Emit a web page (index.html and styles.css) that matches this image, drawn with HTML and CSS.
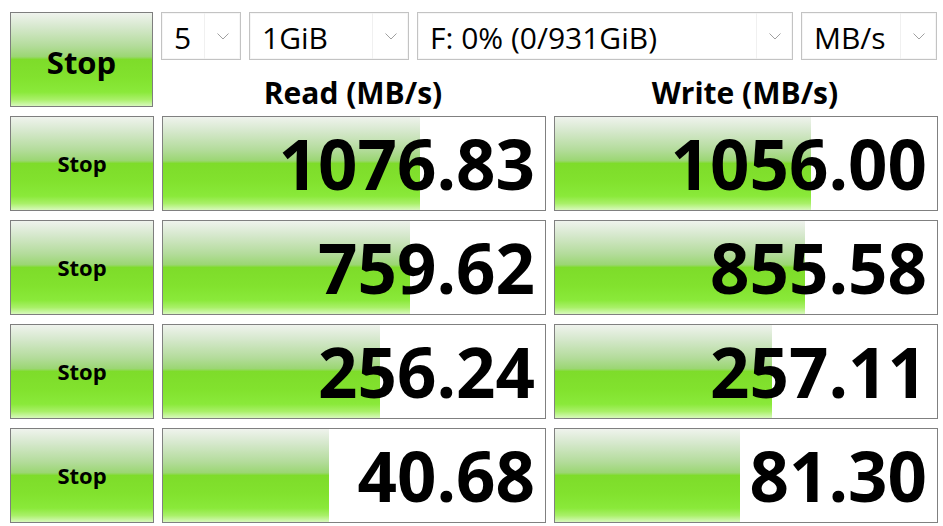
FILE: index.html
```html
<!DOCTYPE html>
<html>
<head>
<meta charset="utf-8">
<link rel="stylesheet" href="styles.css">
</head>
<body>
<div class="app">
  <div class="top">
    <div class="btn btn-main">Stop</div>
    <div class="top-right">
      <div class="combos">
        <div class="combo w80"><span class="val">5</span><span class="arrow"><svg width="12" height="7" viewBox="0 0 12 7"><path d="M0.5 0.5 L6 6 L11.5 0.5" fill="none" stroke="#a0a0a0" stroke-width="1"/></svg></span></div>
        <div class="combo w160"><span class="val">1GiB</span><span class="arrow"><svg width="12" height="7" viewBox="0 0 12 7"><path d="M0.5 0.5 L6 6 L11.5 0.5" fill="none" stroke="#a0a0a0" stroke-width="1"/></svg></span></div>
        <div class="combo w376"><span class="val">F: 0% (0/931GiB)</span><span class="arrow"><svg width="12" height="7" viewBox="0 0 12 7"><path d="M0.5 0.5 L6 6 L11.5 0.5" fill="none" stroke="#a0a0a0" stroke-width="1"/></svg></span></div>
        <div class="combo w136"><span class="val">MB/s</span><span class="arrow"><svg width="12" height="7" viewBox="0 0 12 7"><path d="M0.5 0.5 L6 6 L11.5 0.5" fill="none" stroke="#a0a0a0" stroke-width="1"/></svg></span></div>
      </div>
      <div class="headers">
        <div class="head">Read (MB/s)</div>
        <div class="head">Write (MB/s)</div>
      </div>
    </div>
  </div>

  <div class="row">
    <div class="btn btn-row">Stop</div>
    <div class="panel"><div class="bar" style="width:67.3%"></div><div class="num">1076.83</div></div>
    <div class="panel"><div class="bar" style="width:67.0%"></div><div class="num">1056.00</div></div>
  </div>
  <div class="row">
    <div class="btn btn-row">Stop</div>
    <div class="panel"><div class="bar" style="width:64.7%"></div><div class="num">759.62</div></div>
    <div class="panel"><div class="bar" style="width:65.4%"></div><div class="num">855.58</div></div>
  </div>
  <div class="row">
    <div class="btn btn-row">Stop</div>
    <div class="panel"><div class="bar" style="width:56.8%"></div><div class="num">256.24</div></div>
    <div class="panel"><div class="bar" style="width:56.8%"></div><div class="num">257.11</div></div>
  </div>
  <div class="row">
    <div class="btn btn-row">Stop</div>
    <div class="panel"><div class="bar" style="width:43.5%"></div><div class="num">40.68</div></div>
    <div class="panel"><div class="bar" style="width:48.4%"></div><div class="num">81.30</div></div>
  </div>
</div>
</body>
</html>
```

FILE: styles.css
```css
html, body {
  margin: 0;
  padding: 0;
  background: #ffffff;
}

body {
  font-family: "Open Sans", "Noto Sans", sans-serif;
  color: #000;
  width: 943px;
  height: 526px;
  overflow: hidden;
}

.app {
  padding: 12px 6px 0 10px;
  display: flex;
  flex-direction: column;
  gap: 9px;
}

.top {
  display: flex;
  gap: 8px;
  height: 95px;
}

.btn {
  box-sizing: border-box;
  border: 1px solid #7e7e7e;
  width: 144px;
  display: flex;
  align-items: center;
  justify-content: center;
  font-weight: 700;
  background: linear-gradient(to bottom,
    #eff3ed 0%,
    #d6e8cd 15%,
    #b4dc9c 35%,
    #9bd673 47%,
    #7edc2a 50%,
    #82e22e 70%,
    #8ae93a 85%,
    #a9f069 93%,
    #d8f9bd 100%);
}

.btn-main {
  font-size: 31px;
  padding-top: 5px;
}

.btn-row {
  font-size: 22px;
  padding-bottom: 1px;
}

.top-right {
  flex: 1;
  display: flex;
  flex-direction: column;
}

.combos {
  display: flex;
  gap: 8px;
  height: 48px;
}

.combo {
  box-sizing: border-box;
  height: 48px;
  border: 1px solid #c3c3c3;
  display: flex;
  align-items: stretch;
  background: #fff;
  box-shadow: inset 0 0 0 1px #f6f6f6;
}

.w80 { width: 80px; }
.w160 { width: 160px; }
.w376 { width: 376px; }
.w136 { width: 136px; }

.val {
  flex: 1;
  font-size: 30px;
  line-height: 46px;
  padding-top: 2px;
  padding-left: 12px;
  border-right: 1px solid #f0f0f0;
  white-space: nowrap;
  overflow: hidden;
}

.arrow {
  width: 35px;
  display: flex;
  align-items: center;
  justify-content: center;
  padding-top: 1px;
}

.headers {
  flex: 1;
  display: grid;
  grid-template-columns: 384px 384px;
  gap: 8px;
}

.head {
  font-size: 30px;
  font-weight: 700;
  text-align: center;
  line-height: 40px;
  padding-top: 13px;
}

.row {
  display: grid;
  grid-template-columns: 144px 384px 384px;
  column-gap: 8px;
  height: 95px;
}

.row .btn {
  width: auto;
}

.panel {
  box-sizing: border-box;
  border: 1px solid #808080;
  background: #fff;
  display: grid;
  grid-template-columns: 1fr;
  grid-template-rows: 93px;
}

.bar {
  grid-area: 1 / 1;
  height: 100%;
  background: linear-gradient(to bottom,
    #eff3ed 0%,
    #d6e8cd 15%,
    #b4dc9c 35%,
    #9bd673 47%,
    #7edc2a 50%,
    #82e22e 70%,
    #8ae93a 85%,
    #a9f069 93%,
    #d8f9bd 100%);
}

.num {
  grid-area: 1 / 1;
  z-index: 1;
  font-size: 69px;
  font-weight: 700;
  text-align: right;
  padding-right: 10px;
  line-height: 89px;
  padding-top: 2px;
  white-space: nowrap;
}
```
